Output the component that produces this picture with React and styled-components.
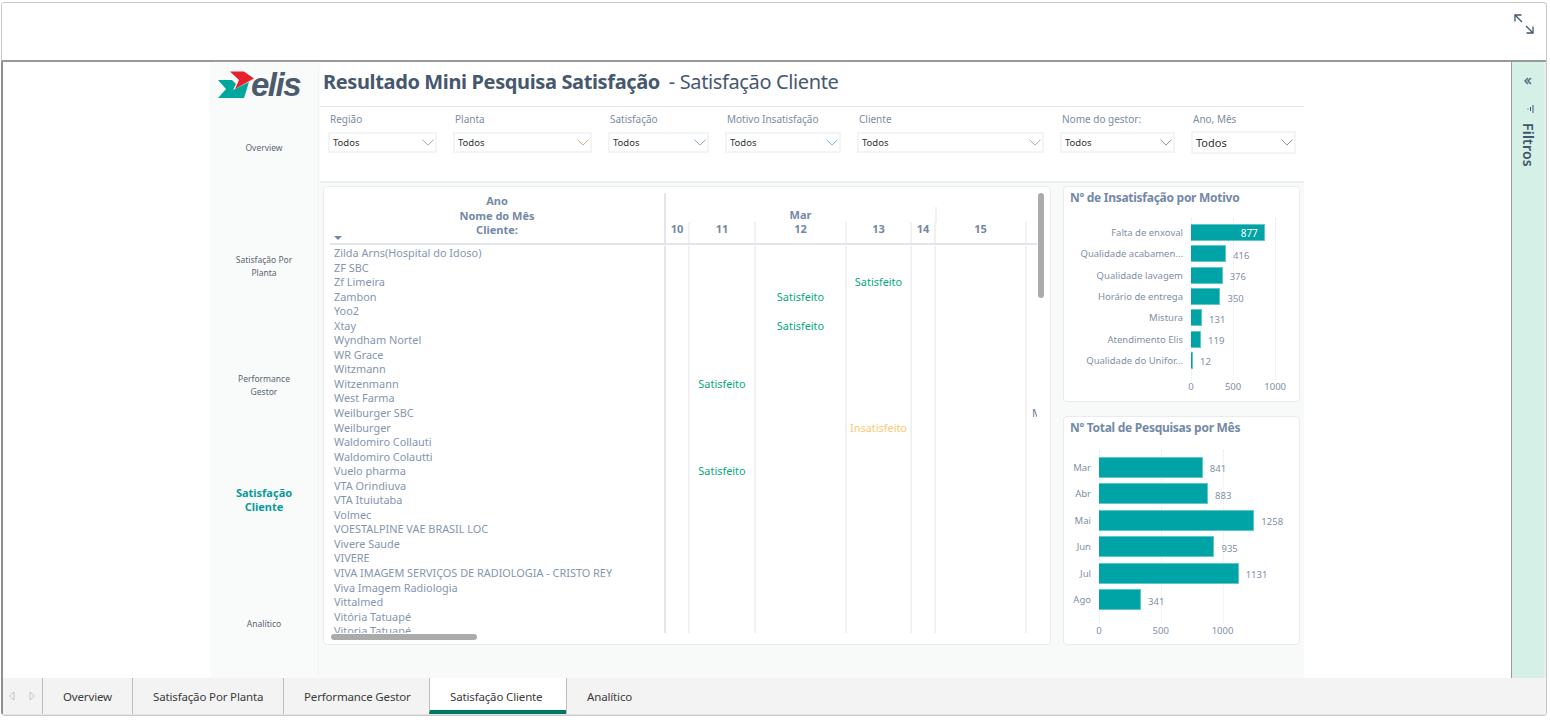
import React from "react"
import styled, { createGlobalStyle } from "styled-components"

const GlobalStyle = createGlobalStyle`
  html, body {
    margin: 0;
    padding: 0;
    background: #fff;
    overflow: hidden;
  }
  * {
    box-sizing: border-box;
  }
  body {
    font-family: "Noto Sans", "Open Sans", sans-serif;
  }
`

const Frame = styled.div`
  margin: 2px 0 0 1px;
  width: 1546px;
  height: 714px;
  border: 1px solid #c8c8c8;
  border-left: none;
  border-radius: 4px;
  display: flex;
  flex-direction: column;
  overflow: hidden;
`
const TopBar = styled.div`
  height: 59px;
  flex: none;
  display: flex;
  justify-content: flex-end;
  padding: 11px 12px 0 0;
  border-left: 1px solid #c8c8c8;
  border-bottom: 2px solid #999;
`
const Body = styled.div`
  flex: 1;
  min-height: 0;
  display: flex;
  border-left: 2px solid #8f8f8f;
`
const Blank = styled.div`
  width: 207px;
  flex: none;
`
const Sidebar = styled.div`
  width: 108px;
  flex: none;
  background: #f9fbfa;
  box-shadow: 2px 0 2px -1px #eceff1;
  display: flex;
  flex-direction: column;
`
const LogoBox = styled.div`
  height: 27px;
  margin: 9px 0 0 8px;
  display: flex;
  align-items: center;
`
const LogoText = styled.span`
  font-family: "Liberation Sans", sans-serif;
  font-style: italic;
  font-weight: 700;
  font-size: 33px;
  line-height: 27px;
  letter-spacing: -1.5px;
  color: #4b5b6e;
  margin-left: -3px;
`
const NavList = styled.div`
  padding-top: 37px;
  display: flex;
  flex-direction: column;
  gap: 95px;
`
const NavItem = styled.div`
  height: 24px;
  display: flex;
  align-items: center;
  justify-content: center;
  text-align: center;
  padding: 0 ${p => (p.$active ? "20px" : "22px")};
  padding-bottom: ${p => (p.$active ? "8px" : "0")};
  font-size: ${p => (p.$active ? "11px" : "8.5px")};
  line-height: ${p => (p.$active ? "14px" : "13px")};
  font-weight: ${p => (p.$active ? 700 : 400)};
  color: ${p => (p.$active ? "#0a9a9c" : "#5b6673")};
`
const Main = styled.div`
  width: 984px;
  flex: none;
  margin-left: 2px;
  background: #f8fafa;
  display: flex;
  flex-direction: column;
`
const TitleBar = styled.div`
  height: 45px;
  background: #fff;
  border-bottom: 1px solid #e2e6ea;
  padding: 4px 0 0 3px;
  font-size: 20px;
  line-height: 32px;
  color: #465870;
  white-space: nowrap;
  letter-spacing: -0.37px;
  b {
    font-weight: 700;
    margin-right: 4px;
  }
`
const Filters = styled.div`
  height: 76px;
  background: #fff;
  border-bottom: 2px solid #eaeef0;
  padding: 5px 0 0 8px;
  display: flex;
  gap: 16px;
`
const Slicer = styled.div`
  width: ${p => p.$w}px;
  flex: none;
`
const SlicerLabel = styled.div`
  font-size: 10px;
  line-height: 14px;
  padding-left: 2px;
  color: #7d8c9e;
  white-space: nowrap;
`
const SlicerBox = styled.div`
  margin-top: ${p => (p.$big ? "5px" : "6px")};
  height: ${p => (p.$big ? "23px" : "21px")};
  border: 2px solid #f2f4f6;
  display: flex;
  align-items: center;
  justify-content: space-between;
  padding: 0 1px 0 3px;
  font-size: ${p => (p.$big ? "11px" : "9.5px")};
  color: #333;
`
const Boards = styled.div`
  display: flex;
  padding: 3px 0 0 3px;
  gap: 12px;
`
const Card = styled.div`
  position: relative;
  background: #fff;
  border: 1px solid #e9ecef;
  border-radius: 4px;
  overflow: hidden;
`
const MatrixCard = styled(Card)`
  width: 728px;
  height: 459px;
  padding: 6px 0 0 6px;
`
const MatrixHead = styled.div`
  display: grid;
  grid-template-columns: ${p => p.$cols};
  grid-template-rows: 29px 1fr;
  width: 707px;
  height: 52px;
  border-bottom: 2px solid #e3e5ed;
  color: #7389a6;
  font-size: 11px;
  font-weight: 700;
  line-height: 14.5px;
`
const CornerCell = styled.div`
  grid-row: 1 / 3;
  position: relative;
  text-align: center;
  padding-top: 1px;
`
const SortMark = styled.span`
  position: absolute;
  left: 4px;
  bottom: 3px;
  width: 0;
  height: 0;
  border-left: 4px solid transparent;
  border-right: 4px solid transparent;
  border-top: 4px solid #7389a6;
`
const MonthCell = styled.div`
  grid-column: 2 / -1;
  text-align: center;
  padding-top: 15px;
  display: grid;
  grid-template-columns: 269px 1fr;
  border-left: 2px solid #e3e5ed;
`
const MonthTail = styled.div`
  border-left: 2px solid #f1f1f3;
  margin-top: -1px;
`
const DayCell = styled.div`
  border-left: ${p => (p.$first ? "2px solid #e3e5ed" : "2px solid #f1f1f3")};
  text-align: center;
`
const MatrixBody = styled.div`
  height: 388px;
  padding-top: 1px;
  overflow: hidden;
  width: 707px;
`
const MatrixRow = styled.div`
  display: grid;
  grid-template-columns: ${p => p.$cols};
  height: 14.55px;
  font-size: 10.9px;
  line-height: 14.55px;
  white-space: nowrap;
`
const ClientCell = styled.div`
  padding-left: 4px;
  color: #8496ae;
`
const statusColor = { Satisfeito: "#06a982", Insatisfeito: "#fcc873", M: "#6b7d99" }
const StatusCell = styled.div`
  border-left: ${p => (p.$first ? "2px solid #e3e5ed" : "2px solid #f1f1f3")};
  text-align: ${p => (p.$status === "M" ? "left" : "center")};
  padding-left: ${p => (p.$status === "M" ? "5px" : "0")};
  overflow: hidden;
  color: ${p => statusColor[p.$status] || "#06a982"};
`
const ScrollV = styled.div`
  position: absolute;
  left: 714px;
  top: 6px;
  width: 6px;
  height: 105px;
  border-radius: 3px;
  background: #ababab;
`
const ScrollH = styled.div`
  position: absolute;
  left: 7px;
  bottom: 4px;
  width: 146px;
  height: 6px;
  border-radius: 3px;
  background: #ababab;
`
const Side = styled.div`
  display: flex;
  flex-direction: column;
  gap: 14px;
`
const ChartCard = styled(Card)`
  width: 237px;
  height: ${p => p.$h}px;
  padding: 2px 0 0 6px;
`
const ChartTitle = styled.div`
  font-size: 12px;
  line-height: 18px;
  font-weight: 700;
  color: #7389a6;
  white-space: nowrap;
  letter-spacing: -0.27px;
`
const Plot = styled.div`
  position: relative;
  margin-top: ${p => p.$top}px;
  padding-left: ${p => p.$left}px;
`
const GridLine = styled.div`
  position: absolute;
  top: -4px;
  bottom: 14px;
  border-left: 1px dotted #e6e8ec;
`
const BarRow = styled.div`
  height: ${p => p.$step}px;
  display: flex;
  align-items: center;
  position: relative;
`
const BarLabel = styled.div`
  position: absolute;
  right: calc(100% + 8px);
  font-size: 9.5px;
  white-space: nowrap;
  color: #7f8fa6;
`
const Bar = styled.div`
  height: ${p => p.$h}px;
  background: #00a4a6;
  border: 1px solid #5fc8c8;
  border-width: 1px 1px 1px 0;
  position: relative;
  z-index: 1;
  flex: none;
  display: flex;
  align-items: center;
  justify-content: flex-end;
  padding-right: ${p => (p.$inside ? "6px" : "0")};
  font-size: 10px;
  color: #fff;
`
const BarValue = styled.div`
  margin-left: 7px;
  padding-top: 3px;
  font-size: 9.5px;
  color: #7f8fa6;
`
const Axis = styled.div`
  position: relative;
  height: 14px;
  margin-top: ${p => p.$top}px;
`
const Tick = styled.span`
  position: absolute;
  transform: translateX(-50%);
  font-size: 9.5px;
  line-height: 14px;
  color: #7f8fa6;
`
const Gutter = styled.div`
  flex: 1;
`
const FilterPane = styled.div`
  width: 35px;
  flex: none;
  background: #d5f0e7;
  border-left: 1px solid #9a9a9a;
  border-right: 2px solid #ececec;
  display: flex;
  flex-direction: column;
  align-items: center;
  padding-top: 15px;
  color: #44546a;
`
const BarsIcon = styled.svg`
  margin: 20px 0 0 3px;
`
const FilterLabel = styled.div`
  writing-mode: vertical-rl;
  font-size: 14px;
  line-height: 16px;
  font-weight: 600;
  margin-top: 10px;
  letter-spacing: 0.2px;
`
const TabBar = styled.div`
  height: 37px;
  flex: none;
  background: #f3f3f3;
  display: flex;
  border-left: 2px solid #8f8f8f;
  border-bottom: 1px solid #e4e4e4;
`
const TabNav = styled.div`
  width: 39px;
  flex: none;
  display: flex;
  align-items: center;
  gap: 14px;
  padding-left: 5px;
`
const Tab = styled.div`
  border-left: 1px solid #bdbdbd;
  border-bottom: ${p => (p.$active ? "4px solid #00775f" : "none")};
  background: ${p => (p.$active ? "#fff" : "transparent")};
  padding: 5px 0 0 20px;
  font-size: 11.5px;
  line-height: 28px;
  color: #3b3b3b;
  white-space: nowrap;
  letter-spacing: -0.15px;
  width: ${p => p.$w}px;
`

const slicers = [
  { label: "Região", w: 109, arrow: "#9aa3ad" },
  { label: "Planta", w: 139, arrow: "#c9a27a" },
  { label: "Satisfação", w: 101, arrow: "#7f9fc4" },
  { label: "Motivo Insatisfação", w: 116, arrow: "#5fb4d8" },
  { label: "Cliente", w: 187, arrow: "#9aa3ad" },
  { label: "Nome do gestor:", w: 115, arrow: "#7a838d" },
  { label: "Ano, Mês", w: 105, arrow: "#7a838d", big: true },
]

const days = ["10", "11", "12", "13", "14", "15", ""]
const gridCols = "334px 24px 66px 91px 65px 24px 91px 12px"

const clients = [
  ["Zilda Arns(Hospital do Idoso)"],
  ["ZF SBC"],
  ["Zf Limeira", 3, "Satisfeito"],
  ["Zambon", 2, "Satisfeito"],
  ["Yoo2"],
  ["Xtay", 2, "Satisfeito"],
  ["Wyndham Nortel"],
  ["WR Grace"],
  ["Witzmann"],
  ["Witzenmann", 1, "Satisfeito"],
  ["West Farma"],
  ["Weilburger SBC", 6, "M"],
  ["Weilburger", 3, "Insatisfeito"],
  ["Waldomiro Collauti"],
  ["Waldomiro Colautti"],
  ["Vuelo pharma", 1, "Satisfeito"],
  ["VTA Orindiuva"],
  ["VTA Ituiutaba"],
  ["Volmec"],
  ["VOESTALPINE VAE BRASIL LOC"],
  ["Vivere Saude"],
  ["VIVERE"],
  ["VIVA IMAGEM SERVIÇOS DE RADIOLOGIA - CRISTO REY"],
  ["Viva Imagem Radiologia"],
  ["Vittalmed"],
  ["Vitória Tatuapé"],
  ["Vitoria Tatuapé"],
]

const motivos = [
  ["Falta de enxoval", 877],
  ["Qualidade acabamen...", 416],
  ["Qualidade lavagem", 376],
  ["Horário de entrega", 350],
  ["Mistura", 131],
  ["Atendimento Elis", 119],
  ["Qualidade do Unifor...", 12],
]

const meses = [
  ["Mar", 841],
  ["Abr", 883],
  ["Mai", 1258],
  ["Jun", 935],
  ["Jul", 1131],
  ["Ago", 341],
]

const Chevron = ({ color, size = 12 }) => (
  <svg width={size} height={size * 0.6} viewBox="0 0 12 7" fill="none">
    <path d="M0.5 0.5L6 6L11.5 0.5" stroke={color} strokeWidth="0.9" />
  </svg>
)

const ExpandIcon = () => (
  <svg width="20" height="20" viewBox="0 0 20 20" fill="none" stroke="#44546a" strokeWidth="1.3">
    <path d="M1 1L8 8" />
    <path d="M12 12L19 19" />
    <path d="M1 7.5V1H7.5" />
    <path d="M19 12.5V19H12.5" />
  </svg>
)

const ElisMark = () => (
  <svg width="36" height="27" viewBox="0 0 36 27">
    <path d="M0 9H14L18 13L15 19L31 11L26 27H0L8 18Z" fill="#00a79d" />
    <path d="M12 0.5H26L36 7.5L17 18L21 9Z" fill="#e8202e" />
  </svg>
)

const BarChart = ({ data, scale, step, barH, labelLeft, top, ticks, axisTop }) => (
  <Plot $top={top} $left={labelLeft}>
    {ticks.map(t => (
      <GridLine key={t} style={{ left: labelLeft + t * scale }} />
    ))}
    {data.map(([label, value]) => {
      const width = Math.max(value * scale, 2)
      const inside = width > 60 && step < 25
      return (
        <BarRow key={label} $step={step}>
          <BarLabel>{label}</BarLabel>
          <Bar $h={barH} $inside={inside} style={{ width }}>
            {inside ? value : ""}
          </Bar>
          {!inside && <BarValue>{value}</BarValue>}
        </BarRow>
      )
    })}
    <Axis $top={axisTop}>
      {ticks.map(t => (
        <Tick key={t} style={{ left: t * scale }}>
          {t}
        </Tick>
      ))}
    </Axis>
  </Plot>
)

export default function App() {
  return (
    <Frame>
      <GlobalStyle />
      <TopBar>
        <ExpandIcon />
      </TopBar>
      <Body>
        <Blank />
        <Sidebar>
          <LogoBox>
            <ElisMark />
            <LogoText>elis</LogoText>
          </LogoBox>
          <NavList>
            <NavItem>Overview</NavItem>
            <NavItem>Satisfação Por Planta</NavItem>
            <NavItem>Performance Gestor</NavItem>
            <NavItem $active>Satisfação Cliente</NavItem>
            <NavItem>Analítico</NavItem>
          </NavList>
        </Sidebar>
        <Main>
          <TitleBar>
            <b>Resultado Mini Pesquisa Satisfação</b> - Satisfação Cliente
          </TitleBar>
          <Filters>
            {slicers.map(s => (
              <Slicer key={s.label} $w={s.w}>
                <SlicerLabel>{s.label}</SlicerLabel>
                <SlicerBox $big={s.big}>
                  Todos
                  <Chevron color={s.arrow} />
                </SlicerBox>
              </Slicer>
            ))}
          </Filters>
          <Boards>
            <MatrixCard>
              <MatrixHead $cols={gridCols}>
                <CornerCell>
                  Ano
                  <br />
                  Nome do Mês
                  <br />
                  Cliente:
                  <SortMark />
                </CornerCell>
                <MonthCell>
                  <span>Mar</span>
                  <MonthTail />
                </MonthCell>
                {days.map((d, i) => (
                  <DayCell key={i} $first={i === 0}>
                    {d}
                  </DayCell>
                ))}
              </MatrixHead>
              <MatrixBody>
                {clients.map(([name, col, status]) => (
                  <MatrixRow key={name} $cols={gridCols}>
                    <ClientCell>{name}</ClientCell>
                    {days.map((d, i) => (
                      <StatusCell key={i} $first={i === 0} $status={col === i ? status : undefined}>
                        {col === i ? status : ""}
                      </StatusCell>
                    ))}
                  </MatrixRow>
                ))}
              </MatrixBody>
              <ScrollV />
              <ScrollH />
            </MatrixCard>
            <Side>
              <ChartCard $h={216}>
                <ChartTitle>Nº de Insatisfação por Motivo</ChartTitle>
                <BarChart
                  data={motivos}
                  scale={0.0842}
                  step={21.3}
                  barH={17}
                  labelLeft={121}
                  top={15}
                  ticks={[0, 500, 1000]}
                  axisTop={9}
                />
              </ChartCard>
              <ChartCard $h={229}>
                <ChartTitle>Nº Total de Pesquisas por Mês</ChartTitle>
                <BarChart
                  data={meses}
                  scale={0.1235}
                  step={26.5}
                  barH={21}
                  labelLeft={29}
                  top={17}
                  ticks={[0, 500, 1000]}
                  axisTop={11}
                />
              </ChartCard>
            </Side>
          </Boards>
        </Main>
        <Gutter />
        <FilterPane>
          <svg width="8" height="8" viewBox="0 0 8 8" fill="none" stroke="#5a6a7e" strokeWidth="1.5">
            <path d="M4 1L1 4L4 7" />
            <path d="M7 1L4 4L7 7" />
          </svg>
          <BarsIcon width="8" height="8" viewBox="0 0 8 8" fill="none" stroke="#44546a" strokeWidth="1">
            <path d="M7 0V8" />
            <path d="M4.5 2V6" />
            <path d="M2 3.5V4.5" />
          </BarsIcon>
          <FilterLabel>Filtros</FilterLabel>
        </FilterPane>
      </Body>
      <TabBar>
        <TabNav>
          <svg width="7" height="10" viewBox="0 0 7 10" fill="none" stroke="#c4c4c4">
            <path d="M6 1L1.5 5L6 9Z" />
          </svg>
          <svg width="7" height="10" viewBox="0 0 7 10" fill="none" stroke="#c4c4c4">
            <path d="M1 1L5.5 5L1 9Z" />
          </svg>
        </TabNav>
        <Tab $w={90}>Overview</Tab>
        <Tab $w={151}>Satisfação Por Planta</Tab>
        <Tab $w={146}>Performance Gestor</Tab>
        <Tab $w={137} $active>Satisfação Cliente</Tab>
        <Tab $w={90}>Analítico</Tab>
      </TabBar>
    </Frame>
  )
}
